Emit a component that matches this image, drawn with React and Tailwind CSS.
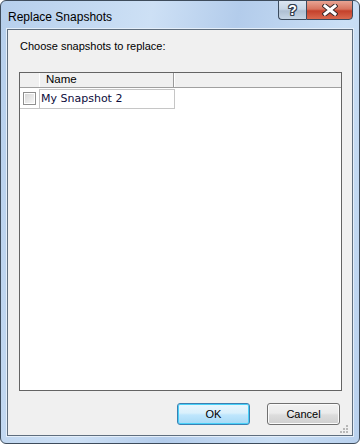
import React from 'react';

const ui = { fontFamily: '"Liberation Sans", Arial, sans-serif' };

function HelpButton() {
  return (
    <div className="w-[28px] h-[20px] flex items-center justify-center border border-[#3b4b5e] border-r-0 rounded-bl-[4px] bg-[linear-gradient(#dbe6f2_0%,#c7d6e6_45%,#aebfd2_55%,#c6d6e6_100%)]">
      <span
        className="text-white font-bold text-[14px] leading-none [text-shadow:1px_0_0_#34404e,-1px_0_0_#34404e,0_1px_0_#34404e,0_-1px_0_#34404e,1px_1px_0_#34404e,-1px_-1px_0_#34404e,1px_-1px_0_#34404e,-1px_1px_0_#34404e]"
        style={ui}
      >
        ?
      </span>
    </div>
  );
}

function CloseButton() {
  return (
    <div className="w-[47px] h-[20px] flex items-center justify-center border border-[#3b4b5e] rounded-br-[4px] bg-[linear-gradient(#e8a493_0%,#d7745f_45%,#c4412b_55%,#d9694f_100%)]">
      <svg width="16" height="12" viewBox="0 0 16 12">
        <path d="M3 2 L13 10 M13 2 L3 10" stroke="#3a2a2a" strokeWidth="5" strokeLinecap="square" />
        <path d="M3 2 L13 10 M13 2 L3 10" stroke="#ffffff" strokeWidth="3" strokeLinecap="square" />
      </svg>
    </div>
  );
}

function Checkbox() {
  return (
    <div className="w-[13px] h-[13px] border border-[#8f8f8f] bg-white p-px">
      <div className="w-full h-full bg-[linear-gradient(135deg,#d8d8d8,#f6f6f6)]" />
    </div>
  );
}

function Grip() {
  const dots = [
    [6, 0], [3, 3], [6, 3], [0, 6], [3, 6], [6, 6],
  ];
  return (
    <div className="absolute right-[4px] bottom-[2px] w-[8px] h-[8px]">
      {dots.map(([x, y], i) => (
        <span key={i} className="absolute w-[2px] h-[2px] bg-[#b8b8b8]" style={{ left: x, top: y }} />
      ))}
    </div>
  );
}

export default function App() {
  return (
    <div className="w-[360px] h-[444px] flex flex-col border border-[#3e4c5c] rounded-[6px] px-[6px] pb-[7px] bg-[linear-gradient(100deg,#b6cfec_0%,#cde0f5_35%,#b3cceb_55%,#cadff5_80%,#b9d1ee_100%)] overflow-hidden">
      {/* Title bar */}
      <div className="h-[28px] flex items-start justify-between">
        <div className="pt-[7px] pl-px text-[12px] text-black" style={ui}>
          Replace Snapshots
        </div>
        <div className="flex -mt-px">
          <HelpButton />
          <CloseButton />
        </div>
      </div>

      {/* Client area */}
      <div className="relative flex-1 flex flex-col border border-[#5f6e7e] bg-[#f0f0f0] shadow-[0_0_0_1px_#e4eef9]">
        <div className="pt-[10px] pl-[12px] h-[23px] text-[11px] leading-[13px] text-black" style={ui}>
          Choose snapshots to replace:
        </div>

        <div className="mt-[19px] ml-[11px] w-[323px] h-[319px] border border-[#646464] bg-white flex flex-col">
          {/* Header */}
          <div className="h-[15px] flex bg-[#f0f0f0] border-b border-[#a0a0a0]">
            <div className="w-[20px] border-r border-[#ffffff]" />
            <div
              className="w-[134px] pl-[6px] flex items-center border-r border-[#9a9a9a] text-[11.5px] text-black"
              style={ui}
            >
              Name
            </div>
            <div className="flex-1 border-l border-white" />
          </div>

          {/* Row */}
          <div className="mt-px w-[155px] h-[20px] flex border-b border-[#c6c6c6]">
            <div className="w-[19px] pl-[3px] flex items-center">
              <Checkbox />
            </div>
            <div
              className="flex-1 pl-px flex items-center border-l border-t border-r border-[#c6c6c6] text-[11px] text-[#0c0c3c]"
              style={{ fontFamily: '"DejaVu Sans", Verdana, sans-serif' }}
            >
              My Snapshot 2
            </div>
          </div>
        </div>

        <div className="mt-[12px] flex justify-end gap-[17px] pr-[12px]">
          <button
            className="w-[73px] h-[22px] rounded-[3px] border border-[#3c7fb1] shadow-[inset_0_0_0_1px_#48d0f8] bg-[linear-gradient(#eaf6fd_0%,#d9f0fc_45%,#bee6fd_55%,#a7d9f5_100%)] text-[11px] text-black"
            style={ui}
          >
            OK
          </button>
          <button
            className="w-[73px] h-[22px] rounded-[3px] border border-[#707070] shadow-[inset_0_0_0_1px_#fbfbfb] bg-[linear-gradient(#f2f2f2_0%,#ebebeb_45%,#dddddd_55%,#cfcfcf_100%)] text-[11px] text-black"
            style={ui}
          >
            Cancel
          </button>
        </div>

        <Grip />
      </div>
    </div>
  );
}
